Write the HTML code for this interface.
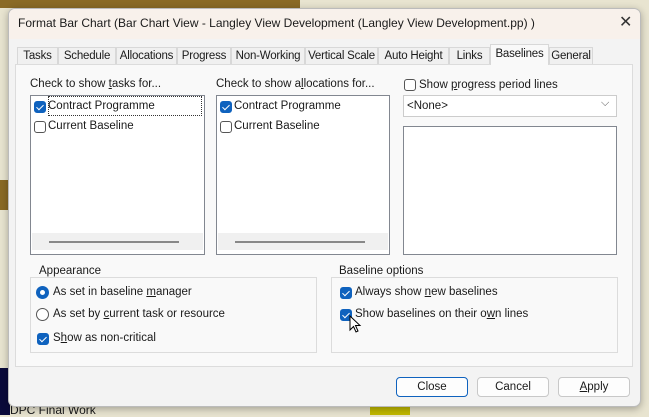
<html><head><style>
body{margin:0;width:649px;height:415px;overflow:hidden;background:#e8e4d0;font-family:"Liberation Sans",sans-serif;font-size:11.5px;color:#1a1a1a;position:relative}
.a{position:absolute;white-space:nowrap}
.cb{position:absolute;width:12px;height:12px;border:1px solid #555;border-radius:3px;background:#fff;box-sizing:border-box}
.cb.on{background:#0f62be;border-color:#0f62be}
.cb.on:after{content:"";position:absolute;left:3px;top:1px;width:3px;height:6px;border:solid #fff;border-width:0 1.3px 1.3px 0;transform:rotate(45deg)}
.tab{position:absolute;top:47px;height:17px;border:1px solid #d8d8d8;border-bottom:none;background:#f0f0f0;box-sizing:border-box;text-align:center;line-height:17px;font-size:11.5px;white-space:nowrap;overflow:hidden;letter-spacing:-0.2px}
.lb{position:absolute;background:#fff;border:1px solid #828790;box-sizing:border-box}
.grp{position:absolute;border:1px solid #dcdcdc;box-sizing:border-box}
.btn{position:absolute;top:377px;height:20px;width:72px;border:1px solid #c8c8c8;border-radius:4px;background:#fdfdfd;box-sizing:border-box;text-align:center;line-height:18px}
</style></head><body>
<div class="a" style="left:0;top:0;width:300px;height:8px;background:#8a6a25"></div>
<div class="a" style="left:0;top:180px;width:10px;height:30px;background:#8a6a25"></div>
<div class="a" style="left:0;top:368px;width:10px;height:47px;background:#0a0a3a"></div>
<div class="a" style="left:370px;top:406px;width:40px;height:9px;background:#c0b800"></div>
<div class="a" style="left:10px;top:403px;font-size:12px">DPC Final Work</div>
<div class="a" style="left:8px;top:8px;width:633px;height:399px;background:#f3f3f3;border:1px solid #bbb;border-radius:7px;box-sizing:border-box;overflow:hidden;box-shadow:0 2px 8px rgba(0,0,0,.3)">
 <div class="a" style="left:0;top:0;width:633px;height:30px;background:#f8f1eb"></div>
 <div class="a" style="left:9px;top:7px;font-size:12px">Format Bar Chart (Bar Chart View - Langley View Development (Langley View Development.pp) )</div>
 <div class="a" style="left:610px;top:3px;font-size:16px;color:#333">✕</div>
</div>
<div class="a" style="left:15px;top:64px;width:618px;height:303px;background:#f9f9f9;border:1px solid #dcdcdc;box-sizing:border-box"></div>
<div class="tab" style="left:17px;width:41px">Tasks</div>
<div class="tab" style="left:58px;width:58px">Schedule</div>
<div class="tab" style="left:116px;width:61px">Allocations</div>
<div class="tab" style="left:177px;width:54px">Progress</div>
<div class="tab" style="left:231px;width:74px">Non-Working</div>
<div class="tab" style="left:305px;width:73px">Vertical Scale</div>
<div class="tab" style="left:378px;width:71px">Auto Height</div>
<div class="tab" style="left:449px;width:41px">Links</div>
<div class="tab" style="left:490px;top:44px;height:21px;width:59px;background:#f9f9f9;line-height:19px">Baselines</div>
<div class="tab" style="left:549px;width:44px">General</div>

<div class="a" style="left:30px;top:78px">Check to show <u>t</u>asks for...</div>
<div class="a" style="left:216px;top:78px">Check to show a<u>l</u>locations for...</div>
<div class="lb" style="left:30px;top:95px;width:175px;height:160px">
 <div class="a" style="left:1px;top:137px;width:171px;height:17px;background:#f0f0f0"></div>
 <div class="a" style="left:18px;top:145px;width:130px;height:2px;background:#888"></div>
</div>
<div class="lb" style="left:216px;top:95px;width:174px;height:160px">
 <div class="a" style="left:1px;top:137px;width:170px;height:17px;background:#f0f0f0"></div>
 <div class="a" style="left:18px;top:145px;width:130px;height:2px;background:#888"></div>
</div>
<div class="a" style="left:48px;top:96px;width:154px;height:20px;border:1px dotted #333;box-sizing:border-box"></div>
<div class="cb on" style="left:34px;top:101px"></div><div class="a" style="left:48px;top:100px">Contract Programme</div>
<div class="cb" style="left:34px;top:121px"></div><div class="a" style="left:48px;top:120px">Current Baseline</div>
<div class="cb on" style="left:220px;top:101px"></div><div class="a" style="left:234px;top:100px">Contract Programme</div>
<div class="cb" style="left:220px;top:121px"></div><div class="a" style="left:234px;top:120px">Current Baseline</div>

<div class="cb" style="left:404px;top:79px"></div><div class="a" style="left:419px;top:79px">Show <u>p</u>rogress period lines</div>
<div class="a" style="left:403px;top:95px;width:214px;height:22px;background:#fff;border:1px solid #ccc;box-sizing:border-box"><span class="a" style="left:3px;top:4px">&lt;None&gt;</span><span class="a" style="left:197px;top:1px;font-size:11px;color:#555">⌵</span></div>
<div class="lb" style="left:403px;top:126px;width:214px;height:129px"></div>

<div class="grp" style="left:30px;top:277px;width:287px;height:76px"></div>
<div class="a" style="left:37px;top:265px;background:#f9f9f9;padding:0 2px">Appearance</div>
<div class="grp" style="left:331px;top:277px;width:287px;height:76px"></div>
<div class="a" style="left:337px;top:265px;background:#f9f9f9;padding:0 2px">Baseline options</div>

<div class="a" style="left:36px;top:286px;width:13px;height:13px;border-radius:50%;background:#0f62be;box-sizing:border-box"><div style="margin:4px;width:5px;height:5px;border-radius:50%;background:#fff"></div></div>
<div class="a" style="left:53px;top:286px">As set in baseline <u>m</u>anager</div>
<div class="a" style="left:36px;top:308px;width:13px;height:13px;border-radius:50%;border:1px solid #555;box-sizing:border-box;background:#fff"></div>
<div class="a" style="left:53px;top:308px">As set by <u>c</u>urrent task or resource</div>
<div class="cb on" style="left:37px;top:333px"></div><div class="a" style="left:53px;top:332px">S<u>h</u>ow as non-critical</div>

<div class="cb on" style="left:340px;top:287px"></div><div class="a" style="left:355px;top:286px">Always show <u>n</u>ew baselines</div>
<div class="cb on" style="left:340px;top:309px"></div><div class="a" style="left:355px;top:308px">Show baselines on their o<u>w</u>n lines</div>
<svg class="a" style="left:349px;top:315px" width="14" height="20"><path d="M1 1 L1 15 L4.5 11.5 L7 17 L9 16 L6.5 10.5 L11 10.5 Z" fill="#fff" stroke="#000" stroke-width="1"/></svg>

<div class="btn" style="left:396px;border:1px solid #0f62be">Close</div>
<div class="btn" style="left:477px">Cancel</div>
<div class="btn" style="left:558px"><u>A</u>pply</div>
</body></html>
